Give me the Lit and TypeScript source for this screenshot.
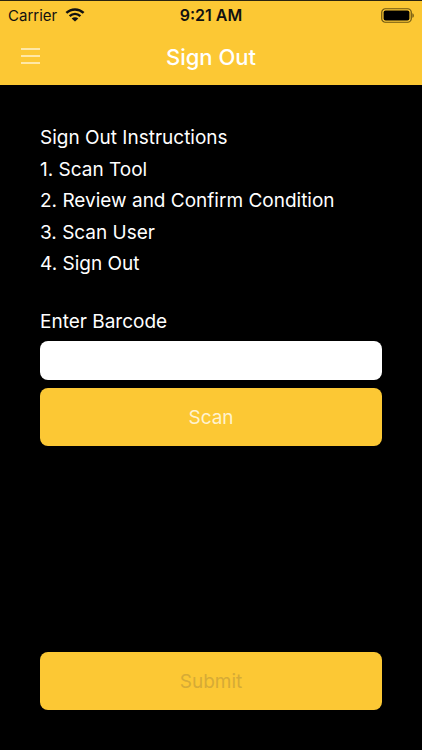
import { LitElement, html, css } from "lit";
import { customElement } from "lit/decorators.js";

@customElement("app-root")
export class AppRoot extends LitElement {
  static styles = css`
    :host {
      display: flex;
      flex-direction: column;
      width: 422px;
      height: 750px;
      background: #000;
      font-family: Inter, "Liberation Sans", sans-serif;
      overflow: hidden;
    }
    .head {
      height: 85px;
      box-sizing: border-box;
      background: #fcc834;
      border-top: 1px solid #2a2410;
    }
    .status {
      height: 28px;
      display: grid;
      grid-template-columns: 1fr auto 1fr;
      align-items: center;
      padding: 0 8px;
      color: #111;
      font-size: 15px;
    }
    .carrier {
      display: flex;
      align-items: center;
      gap: 8px;
    }
    .time {
      font-weight: 600;
      font-size: 16px;
    }
    .battery {
      justify-self: end;
      display: block;
    }
    .nav {
      height: 55px;
      display: grid;
      grid-template-columns: 1fr auto 1fr;
      align-items: center;
      padding: 0 21px;
      color: #fff;
    }
    .title {
      font-size: 22px;
      font-weight: 500;
    }
    .menu {
      display: block;
      margin-top: -2px;
    }
    .main {
      flex: 1;
      display: flex;
      flex-direction: column;
      padding: 37px 40px 40px;
      color: #fff;
    }
    .lines {
      font-size: 19px;
      line-height: 31.6px;
    }
    .label {
      margin-top: 26px;
      font-size: 19px;
      line-height: 32px;
    }
    .input {
      height: 39px;
      margin-top: 3px;
      border-radius: 8px;
      background: #fff;
    }
    .btn {
      display: flex;
      align-items: center;
      justify-content: center;
      height: 58px;
      box-sizing: border-box;
      padding-top: 1px;
      border-radius: 8px;
      background: #fcc834;
      font-size: 19px;
    }
    .scan {
      margin-top: 8px;
      color: #fff3d0;
    }
    .submit {
      margin-top: auto;
      color: #d6ab36;
    }
  `;

  render() {
    return html`
      <div class="head">
        <div class="status">
          <div class="carrier">
            Carrier
            <svg width="20" height="14" viewBox="0 0 18 13" fill="none" stroke="#111" stroke-width="2.3">
              <path d="M1 4.6 C5.6 .2 12.4 .2 17 4.6" />
              <path d="M4 7.6 C7 4.9 11 4.9 14 7.6" />
              <path d="M9 12.6 L5.9 9.7 C7.7 8.2 10.3 8.2 12.1 9.7 Z" fill="#111" stroke="none" />
            </svg>
          </div>
          <div class="time">9:21 AM</div>
          <svg class="battery" width="33" height="15" viewBox="0 0 33 15">
            <rect x=".75" y=".75" width="29.5" height="13.5" rx="3.6" fill="none" stroke="#6b5512" stroke-width="1.2" />
            <rect x="2.6" y="2.6" width="25.8" height="9.8" rx="2" fill="#000" />
            <path d="M31.4 5.2 C32.4 5.6 32.8 6.4 32.8 7.5 C32.8 8.6 32.4 9.4 31.4 9.8 Z" fill="#6b5512" />
          </svg>
        </div>
        <div class="nav">
          <svg class="menu" width="19" height="16" viewBox="0 0 19 16" stroke="#fff2cc" stroke-width="1.6">
            <path d="M0 1H19M0 8H19M0 15H19" />
          </svg>
          <div class="title">Sign Out</div>
          <span></span>
        </div>
      </div>
      <div class="main">
        <div class="lines">
          <div>Sign Out Instructions</div>
          <div>1. Scan Tool</div>
          <div>2. Review and Confirm Condition</div>
          <div>3. Scan User</div>
          <div>4. Sign Out</div>
        </div>
        <div class="label">Enter Barcode</div>
        <div class="input"></div>
        <div class="btn scan">Scan</div>
        <div class="btn submit">Submit</div>
      </div>
    `;
  }
}
